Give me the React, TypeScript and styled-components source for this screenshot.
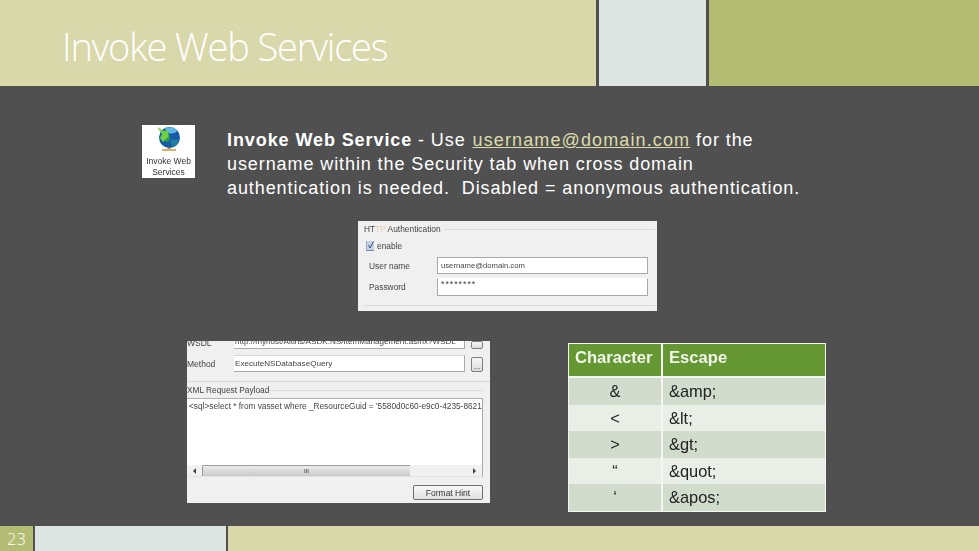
import React from "react";
import styled, { createGlobalStyle } from "styled-components";

const Global = createGlobalStyle`
  html, body { margin: 0; padding: 0; background: #505050; }
  body { width: 979px; height: 551px; overflow: hidden; font-family: "Liberation Sans", Arial, sans-serif; }
`;

const Slide = styled.div`
  width: 979px;
  height: 551px;
  display: flex;
  flex-direction: column;
  background: #505050;
`;
const Band = styled.div<{ $h: number; $cols: string; $gap: number }>`
  height: ${(p) => p.$h}px;
  flex: none;
  display: grid;
  grid-template-columns: ${(p) => p.$cols};
  column-gap: ${(p) => p.$gap}px;
`;
const Cell = styled.div<{ $bg: string }>`
  background: ${(p) => p.$bg};
  min-width: 0;
`;
const TitleCell = styled(Cell)`
  padding: 21px 0 0 62px;
`;
const Title = styled.h1`
  margin: 0;
  font-family: "Open Sans", sans-serif;
  font-weight: 300;
  font-size: 38px;
  line-height: 50px;
  letter-spacing: -1.15px;
  color: #ffffff;
`;
const Body = styled.div`
  flex: 1;
  display: flex;
  flex-direction: column;
  padding-top: 39px;
`;
const Intro = styled.div`
  display: flex;
  align-items: flex-start;
  gap: 32px;
  padding-left: 142px;
`;
const IconCard = styled.div`
  width: 53px;
  height: 53px;
  background: #fff;
  display: flex;
  flex-direction: column;
  align-items: center;
  color: #333;
  filter: blur(0.45px);
`;
const IconCaption = styled.div`
  font-size: 8.5px;
  line-height: 11px;
  text-align: center;
  margin-top: 3px;
`;
const Lead = styled.p`
  margin: 3px 0 0;
  font-size: 18px;
  line-height: 24px;
  letter-spacing: 0.91px;
  color: #fff;
  white-space: pre;
`;
const Link = styled.span`
  color: #dcdcaa;
  text-decoration: underline;
  letter-spacing: 1.12px;
  margin-left: 1px;
`;
const AuthPanel = styled.div`
  width: 299px;
  height: 90px;
  margin: 21px 0 0 358px;
  background: #f0f0f0;
  color: #444;
  font-size: 8.4px;
  padding: 3px 9px 0 6px;
  box-sizing: border-box;
  filter: blur(0.6px);
  display: flex;
  flex-direction: column;
`;
const Legend = styled.div`
  display: flex;
  align-items: center;
  gap: 3px;
  height: 10px;
  line-height: 10px;
  margin-right: -7px;
`;
const Rule = styled.div`
  flex: 1;
  height: 1px;
  background: #dcdcdc;
`;
const Faint = styled.span`
  color: #e4cfa6;
`;
const CheckRow = styled.div`
  display: flex;
  align-items: center;
  gap: 3px;
  height: 11px;
  margin: 6px 0 0 2px;
`;
const Check = styled.div`
  width: 8px;
  height: 10px;
  background: #c6d2e4;
  border-bottom: 1px solid #7a8aa0;
  border-left: 1px solid #9aa8bc;
  box-sizing: border-box;
  display: flex;
  align-items: center;
  justify-content: center;
`;
const FieldRow = styled.div<{ $top: number; $h: number }>`
  display: flex;
  align-items: center;
  height: ${(p) => p.$h}px;
  margin-top: ${(p) => p.$top}px;
`;
const FieldLabel = styled.div`
  width: 73px;
  padding-left: 5px;
  box-sizing: border-box;
  flex: none;
`;
const Field = styled.div<{ $noTop?: boolean }>`
  flex: 1;
  height: 100%;
  box-sizing: border-box;
  background: #fff;
  border: 1px solid #a9a9a9;
  border-top-color: ${(p) => (p.$noTop ? "#fff" : "#a9a9a9")};
  padding: 0 3px;
  display: flex;
  align-items: ${(p) => (p.$noTop ? "flex-start" : "center")};
  font-size: ${(p) => (p.$noTop ? 9 : 7.7)}px;
  letter-spacing: ${(p) => (p.$noTop ? 0.9 : 0)}px;
  line-height: 11px;
  color: #444;
`;
const AuthFooter = styled.div`
  height: 1px;
  background: #dcdcdc;
  margin: 9px -7px 0 0;
`;
const Lower = styled.div`
  display: flex;
  align-items: flex-start;
  gap: 78px;
  margin-top: 30px;
  padding-left: 187px;
`;
const PayloadPanel = styled.div`
  width: 303px;
  height: 162px;
  background: #f0f0f0;
  color: #444;
  font-size: 8.1px;
  padding-right: 7px;
  box-sizing: border-box;
  overflow: hidden;
  filter: blur(0.5px);
  display: flex;
  flex-direction: column;
`;
const WsdlRow = styled.div<{ $h: number; $top: number }>`
  display: flex;
  align-items: flex-end;
  height: ${(p) => p.$h}px;
  margin-top: ${(p) => p.$top}px;
  flex: none;
  overflow: hidden;
`;
const RowLabel = styled.div`
  width: 47px;
  flex: none;
  align-self: center;
  font-size: 8.5px;
`;
const ClipLabel = styled(RowLabel)`
  align-self: flex-start;
  line-height: 4px;
  height: 5px;
`;
const RowInput = styled.div`
  width: 231px;
  flex: none;
  height: 100%;
  box-sizing: border-box;
  background: #fff;
  border-right: 1px solid #a9a9a9;
  border-bottom: 1px solid #a9a9a9;
  padding-left: 1px;
  white-space: nowrap;
  overflow: hidden;
  display: flex;
  align-items: flex-end;
  line-height: 12px;
`;
const MethodInput = styled(RowInput)`
  border-top: 1px solid #d8d8d8;
  align-items: flex-start;
  padding-top: 2px;
`;
const DotsBtn = styled.div<{ $h: number }>`
  width: 12px;
  height: ${(p) => p.$h}px;
  margin-left: 6px;
  box-sizing: border-box;
  border: 1px solid #7f7f7f;
  border-radius: 2px;
  background: linear-gradient(#f6f6f6, #dcdcdc);
  font-size: 8px;
  line-height: ${(p) => p.$h + 3}px;
  text-align: center;
  color: #333;
  overflow: hidden;
`;
const PanelRule = styled.div`
  height: 1px;
  flex: none;
  background: #d8d8d8;
  margin: 9px -7px 0 0;
`;
const PayloadLegend = styled.div`
  display: flex;
  align-items: center;
  height: 10px;
  line-height: 10px;
  margin-top: 3px;
  white-space: nowrap;
  font-size: 8.3px;
`;
const TextArea = styled.div`
  flex: none;
  height: 67px;
  margin-top: 3px;
  background: #fff;
  border-top: 1px solid #b0b0b0;
  border-right: 1px solid #a9a9a9;
  box-sizing: border-box;
  padding: 2px 0 0 2px;
  white-space: nowrap;
  overflow: hidden;
  font-size: 8.3px;
  line-height: 11px;
`;
const ScrollBar = styled.div`
  height: 12px;
  flex: none;
  display: flex;
  align-items: center;
  background: #f1f1f1;
  border-right: 1px solid #a9a9a9;
  border-bottom: 1px solid #e4e4e4;
  box-sizing: border-box;
  padding: 0 6px 0 6px;
  gap: 6px;
`;
const Arrow = styled.div<{ $dir: "l" | "r" }>`
  width: 0;
  height: 0;
  border-top: 3px solid transparent;
  border-bottom: 3px solid transparent;
  ${(p) => (p.$dir === "l" ? "border-right: 3px solid #444;" : "border-left: 3px solid #444; margin-left: auto;")}
`;
const Thumb = styled.div`
  width: 208px;
  height: 11px;
  box-sizing: border-box;
  border: 1px solid #9c9c9c;
  border-bottom: none;
  border-right: none;
  background: linear-gradient(#ececec, #c9c9c9);
  font-size: 6px;
  line-height: 10px;
  text-align: center;
  border-radius: 2px 0 0 0;
  color: #333;
`;
const HintRow = styled.div`
  display: flex;
  justify-content: flex-end;
  margin-top: 8px;
`;
const HintBtn = styled.div`
  width: 70px;
  height: 15px;
  box-sizing: border-box;
  border: 1px solid #6f6f6f;
  border-radius: 2px;
  background: linear-gradient(#f8f8f8, #e2e2e2);
  text-align: center;
  font-size: 8.5px;
  line-height: 14px;
  color: #333;
`;
const Table = styled.div`
  width: 258px;
  margin-top: 2px;
  box-sizing: border-box;
  background: #f4f6f2;
  padding: 1px;
  display: grid;
  grid-template-columns: 92px 1fr;
  column-gap: 2px;
  filter: blur(0.35px);
`;
const Head = styled.div`
  height: 32px;
  margin-bottom: 2px;
  background: #659833;
  color: #f1f5ea;
  font-weight: 700;
  font-size: 16.6px;
  line-height: 28px;
  padding-left: 6px;
`;
const TCell = styled.div<{ $alt: boolean; $center?: boolean }>`
  height: 26.6px;
  background: ${(p) => (p.$alt ? "#e9eee6" : "#d2dccd")};
  color: #222;
  font-size: 16.4px;
  line-height: 26px;
  padding-left: ${(p) => (p.$center ? 0 : 6)}px;
  text-align: ${(p) => (p.$center ? "center" : "left")};
`;
const FooterNum = styled.div`
  background: #b3bc73;
  color: #fff;
  font-family: "Open Sans", sans-serif;
  font-weight: 300;
  font-size: 16.5px;
  line-height: 25px;
  text-align: center;
`;

const rows = [
  ["&", "&amp;"],
  ["<", "&lt;"],
  [">", "&gt;"],
  ["“", "&quot;"],
  ["‘", "&apos;"],
];

const Globe = () => (
  <svg width="28" height="28" viewBox="0 0 28 28">
    <rect x="12.5" y="21" width="3" height="3" fill="#c9964a" />
    <rect x="7" y="24" width="14" height="2" fill="#dfae66" />
    <circle cx="14.5" cy="12.5" r="10.5" fill="#155ba6" />
    <path d="M10 3.5c4-2 9-2 12 2 0 2-4 3-6 3S10 6 10 3.5z" fill="#5fb6ea" />
    <path d="M9 10c3-2 6-1 6 2 1 3-2 5-4 5-2-2-3-5-2-7z" fill="#2c9a52" />
    <path d="M16 15c3-1 6 0 8 0-1 4-3 6-6 7-2-2-3-5-2-7z" fill="#1f7fa0" />
    <path d="M2 2l7 4 5-1-1 7-5 5-3-4 2-4z" fill="#6fd044" />
  </svg>
);

export default function App() {
  return (
    <Slide>
      <Global />
      <Band $h={86} $cols="596px 107px 1fr" $gap={3}>
        <TitleCell $bg="#d9d8ab">
          <Title>Invoke Web Services</Title>
        </TitleCell>
        <Cell $bg="#dce5e1" />
        <Cell $bg="#b3bc73" />
      </Band>
      <Body>
        <Intro>
          <IconCard>
            <Globe />
            <IconCaption>
              Invoke Web
              <br />
              Services
            </IconCaption>
          </IconCard>
          <Lead>
            <b>Invoke Web Service</b> - Use <Link>username@domain.com</Link> for the
            {"\n"}username within the Security tab when cross domain
            {"\n"}authentication is needed.  Disabled = anonymous authentication.
          </Lead>
        </Intro>
        <AuthPanel>
          <Legend>
            <span>
              HT<Faint>TP</Faint> Authentication
            </span>
            <Rule />
          </Legend>
          <CheckRow>
            <Check>
              <svg width="6" height="8" viewBox="0 0 6 8">
                <path d="M0.5 4L2 7 5.5 0.5" fill="none" stroke="#34507c" strokeWidth="1" />
              </svg>
            </Check>
            enable
          </CheckRow>
          <FieldRow $top={6} $h={17}>
            <FieldLabel>User name</FieldLabel>
            <Field>username@domain.com</Field>
          </FieldRow>
          <FieldRow $top={4} $h={18}>
            <FieldLabel>Password</FieldLabel>
            <Field $noTop>********</Field>
          </FieldRow>
          <AuthFooter />
        </AuthPanel>
        <Lower>
          <PayloadPanel>
            <WsdlRow $h={8} $top={0}>
              <ClipLabel>WSDL</ClipLabel>
              <RowInput>http://myhost/Altiris/ASDK.NS/ItemManagement.asmx?WSDL</RowInput>
              <DotsBtn $h={8}>...</DotsBtn>
            </WsdlRow>
            <WsdlRow $h={17} $top={6}>
              <RowLabel>Method</RowLabel>
              <MethodInput>ExecuteNSDatabaseQuery</MethodInput>
              <DotsBtn $h={15}>...</DotsBtn>
            </WsdlRow>
            <PanelRule />
            <PayloadLegend>
              XML Request Payload
              <Rule />
            </PayloadLegend>
            <TextArea>
              {"<sql>select * from vasset where _ResourceGuid = '5580d0c60-e9c0-4235-8621-5"}
            </TextArea>
            <ScrollBar>
              <Arrow $dir="l" />
              <Thumb>III</Thumb>
              <Arrow $dir="r" />
            </ScrollBar>
            <HintRow>
              <HintBtn>Format Hint</HintBtn>
            </HintRow>
          </PayloadPanel>
          <Table>
            <Head>Character</Head>
            <Head>Escape</Head>
            {rows.map(([c, e], i) => (
              <React.Fragment key={e}>
                <TCell $alt={i % 2 === 1} $center>
                  {c}
                </TCell>
                <TCell $alt={i % 2 === 1}>{e}</TCell>
              </React.Fragment>
            ))}
          </Table>
        </Lower>
      </Body>
      <Band $h={25} $cols="33px 191px 1fr" $gap={2}>
        <FooterNum>23</FooterNum>
        <Cell $bg="#dce5e1" />
        <Cell $bg="#d9d8ab" />
      </Band>
    </Slide>
  );
}
